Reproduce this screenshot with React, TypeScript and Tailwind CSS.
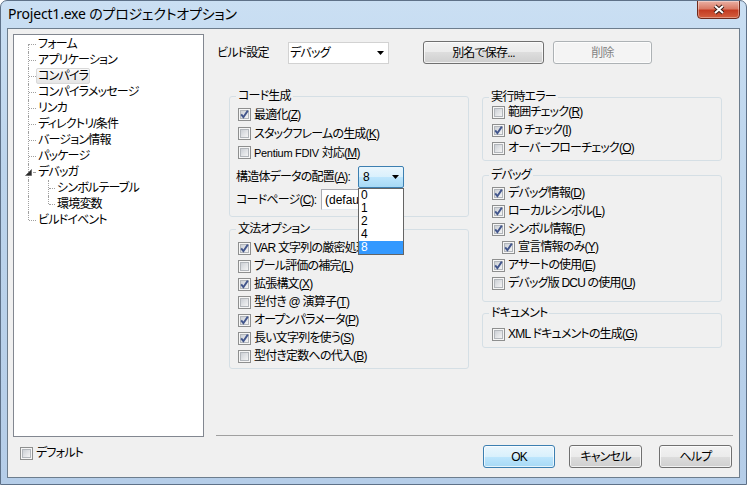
import React from "react";

const FONT = "font-['Liberation_Sans','Noto_Sans_CJK_JP',sans-serif] [font-feature-settings:'palt'] tracking-[-0.8px]";

const mn = (s: string, k: string) => (
  <>
    {s}(<u className="underline-offset-[1px]">{k}</u>)
  </>
);

function Check({ on }: { on?: boolean }) {
  return (
    <svg width="13" height="13" viewBox="0 0 13 13" className="flex-none">
      <defs>
        <linearGradient id="cbg" x1="0" y1="0" x2="1" y2="1">
          <stop offset="0" stopColor="#c9cdd3" />
          <stop offset="1" stopColor="#f7f7f7" />
        </linearGradient>
      </defs>
      <rect x="0.5" y="0.5" width="12" height="12" fill="#f6f6f6" stroke="#8e8f8f" />
      <rect x="2.5" y="2.5" width="8" height="8" fill="url(#cbg)" stroke="#b2b6bb" />
      {on && <path d="M3.2 6.4 L5.4 9.2 L9.8 2.6" fill="none" stroke="#42568c" strokeWidth="1.9" />}
    </svg>
  );
}

function CB({ on, children, indent }: { on?: boolean; children: React.ReactNode; indent?: boolean }) {
  return (
    <div className={`flex h-[18px] items-center gap-[3px] ${indent ? "pl-[10px]" : ""}`}>
      <Check on={on} />
      <span className="whitespace-nowrap leading-[14px]">{children}</span>
    </div>
  );
}

function Group({ title, className, children }: { title: string; className: string; children: React.ReactNode }) {
  return (
    <div className={`relative rounded-[3px] border border-[#d5dfe5] ${className}`}>
      <span className="absolute -top-[8px] left-[6px] bg-[#f0f0f0] px-[2px] leading-[14px]">{title}</span>
      {children}
    </div>
  );
}

function Button({ children, kind, className }: { children: React.ReactNode; kind?: "default" | "disabled"; className: string }) {
  const look =
    kind === "default"
      ? "border-[#3c7fb1] bg-[linear-gradient(180deg,#eaf6fd_0%,#d9f0fc_50%,#bee6fd_50%,#a7d9f5_100%)] text-black"
      : kind === "disabled"
      ? "border-[#adb2b5] bg-[#f4f4f4] text-[#838383]"
      : "border-[#707070] bg-[linear-gradient(180deg,#f2f2f2_0%,#ebebeb_50%,#dddddd_50%,#cfcfcf_100%)] text-black";
  return (
    <div className={`flex h-[23px] items-center justify-center rounded-[3px] border shadow-[inset_0_0_0_1px_rgba(255,255,255,0.7)] ${look} ${className}`}>
      {children}
    </div>
  );
}

const Arrow = () => (
  <svg width="7" height="4" viewBox="0 0 7 4" className="flex-none">
    <path d="M0 0 H7 L3.5 4 Z" fill="#000" />
  </svg>
);

const TREE = [
  { t: "フォーム" },
  { t: "アプリケーション" },
  { t: "コンパイラ", sel: true },
  { t: "コンパイラメッセージ" },
  { t: "リンカ" },
  { t: "ディレクトリ/条件" },
  { t: "バージョン情報" },
  { t: "パッケージ" },
  { t: "デバッガ", open: true },
  { t: "シンボルテーブル", child: true },
  { t: "環境変数", child: true, lastChild: true },
  { t: "ビルドイベント", last: true },
];

function TreeRow({ r, i }: { r: (typeof TREE)[number]; i: number }) {
  const dot = "border-dotted border-[#a0a0a0]";
  return (
    <div className={`relative flex h-[16px] items-center ${r.child ? "pl-[41px]" : "pl-[22px]"}`}>
      {/* root vertical connector */}
      <span
        className={`absolute left-[14px] w-0 border-l ${dot} ${
          i === 0 ? "top-[8px] bottom-0" : r.last ? "top-0 h-[8px]" : "top-0 bottom-0"
        }`}
      />
      {r.child ? (
        <>
          <span className={`absolute left-[34px] w-0 border-l ${dot} ${r.lastChild ? "top-0 h-[8px]" : "top-0 bottom-0"}`} />
          <span className={`absolute left-[35px] top-[8px] h-0 w-[6px] border-t ${dot}`} />
        </>
      ) : r.open ? (
        <>
          <svg width="7" height="7" viewBox="0 0 7 7" className="absolute left-[11px] top-[5px]">
            <path d="M6.5 0.5 V6.5 H0.5 Z" fill="#2b2b2b" stroke="#555" strokeWidth="0.6" />
          </svg>
          <span className={`absolute left-[19px] top-[8px] h-0 w-[2px] border-t ${dot}`} />
        </>
      ) : (
        <span className={`absolute left-[15px] top-[8px] h-0 w-[7px] border-t ${dot}`} />
      )}
      <span
        className={`whitespace-nowrap rounded-[2px] border px-[1px] leading-[14px] ${
          r.sel ? "border-[#d9d9d9] bg-[linear-gradient(180deg,#fafafa,#e5e5e5)]" : "border-transparent"
        }`}
      >
        {r.t}
      </span>
    </div>
  );
}

export default function App() {
  return (
    <div
      className={`${FONT} flex h-[485px] w-[747px] flex-col overflow-hidden rounded-t-[7px] border border-[#5e7188] bg-[linear-gradient(180deg,#cadff3_0%,#bcd4ec_35%,#b5cde8_100%)] text-[12px] text-black`}
    >
      {/* TITLE BAR */}
      <div className="flex h-[27px] flex-none items-start justify-between">
        <div className="pl-[7px] pt-[3px] font-['Noto_Sans','Noto_Sans_CJK_JP',sans-serif] text-[14px] leading-[20px] tracking-[-0.2px] text-black [font-feature-settings:'palt']">
          Project1.exe のプロジェクトオプション
        </div>
        <div className="mr-[6px] mt-[-1px] flex h-[19px] w-[43px] items-center justify-center rounded-b-[4px] border border-[#6e2a1c] bg-[linear-gradient(180deg,#eab1a4_0%,#d97b66_45%,#c43c22_55%,#d4603f_100%)] shadow-[inset_0_0_0_1px_rgba(255,255,255,0.35)]">
          <svg width="14" height="11" viewBox="0 0 14 11">
            <path d="M3 2 L11 9 M11 2 L3 9" stroke="#3b1d16" strokeWidth="4" />
            <path d="M3 2 L11 9 M11 2 L3 9" stroke="#fff" strokeWidth="2" />
          </svg>
        </div>
      </div>

      {/* CLIENT AREA */}
      <div className="ml-[6px] flex h-[450px] w-[733px] flex-none border border-[#6d7d8d] bg-[#f0f0f0]">
        {/* left: tree + default */}
        <div className="flex w-[208px] flex-none flex-col">
          <div className="ml-[5px] mt-[5px] h-[403px] w-[191px] border border-[#828790] bg-white pt-[1px]">
            {TREE.map((r, i) => (
              <TreeRow key={r.t} r={r} i={i} />
            ))}
          </div>
          <div className="ml-[12px] mt-[7px]">
            <CB>デフォルト</CB>
          </div>
        </div>

        {/* right: options */}
        <div className="flex w-[517px] flex-none flex-col">
          {/* build config row */}
          <div className="mt-[12px] flex h-[23px] items-center">
            <span className="w-[72px] pl-[1px]">ビルド設定</span>
            <div className="flex h-[22px] w-[101px] items-center justify-between border border-[#d2d2d2] bg-white pl-[1px] pr-[4px]">
              <span>デバッグ</span>
              <Arrow />
            </div>
            <Button className="ml-[34px] w-[121px]">別名で保存...</Button>
            <Button kind="disabled" className="ml-[9px] w-[99px]">削除</Button>
          </div>

          {/* option groups */}
          <div className="mt-[32px] flex gap-[13px] pl-[13px]">
            <div className="flex w-[240px] flex-col">
              <Group title="コード生成" className="h-[121px] pl-[8px] pt-[8px]">
                <div className="[&>div]:h-[19px]">
                  <CB on>{mn("最適化", "Z")}</CB>
                  <CB>{mn("スタックフレームの生成", "K")}</CB>
                  <CB>
                    <span className="text-[11px] tracking-[-0.3px]">Pentium FDIV </span>
                    {mn("対応", "M")}
                  </CB>
                </div>
                <div className="ml-[-2px] mt-[4px] flex items-center">
                  <span className="w-[122px] whitespace-nowrap">{mn("構造体データの配置", "A")}:</span>
                  <div className="relative">
                    <div className="flex h-[22px] w-[46px] items-center justify-between rounded-[2px] border border-[#3c7fb1] bg-[linear-gradient(180deg,#eaf6fd_0%,#d9f0fc_50%,#bee6fd_50%,#a7d9f5_100%)] pl-[4px] pr-[4px]">
                      <span>8</span>
                      <Arrow />
                    </div>
                    {/* open drop-down list */}
                    <div className="absolute left-0 top-[22px] z-10 w-[46px] border border-[#646464] bg-white">
                      {["0", "1", "2", "4", "8"].map((v) => (
                        <div
                          key={v}
                          className={`h-[13px] pl-[2px] leading-[13px] ${v === "8" ? "bg-[#3399ff] text-white" : ""}`}
                        >
                          {v}
                        </div>
                      ))}
                    </div>
                  </div>
                </div>
                <div className="ml-[-2px] mt-[1px] flex items-center">
                  <span className="w-[85px] whitespace-nowrap">{mn("コードページ", "C")}:</span>
                  <div className="flex h-[21px] w-[80px] items-center overflow-hidden border border-[#abadb3] border-b-[#e3e9ef] border-r-[#dbdfe6] bg-white pl-[3px] tracking-normal">
                    (default)
                  </div>
                </div>
              </Group>

              <Group title="文法オプション" className="mt-[12px] h-[140px] pl-[8px] pt-[9px]">
                <CB on>VAR {mn("文字列の厳密処理", "V")}</CB>
                <CB>{mn("ブール評価の補完", "L")}</CB>
                <CB on>{mn("拡張構文", "X")}</CB>
                <CB>{mn("型付き @ 演算子", "T")}</CB>
                <CB on>{mn("オープンパラメータ", "P")}</CB>
                <CB on>{mn("長い文字列を使う", "S")}</CB>
                <CB>{mn("型付き定数への代入", "B")}</CB>
              </Group>
            </div>

            <div className="mt-[1px] flex w-[240px] flex-col">
              <Group title="実行時エラー" className="h-[64px] pl-[9px] pt-[5px]">
                <CB>{mn("範囲チェック", "R")}</CB>
                <CB on>I/O {mn("チェック", "I")}</CB>
                <CB>{mn("オーバーフローチェック", "O")}</CB>
              </Group>
              <Group title="デバッグ" className="mt-[14px] h-[127px] pl-[9px] pt-[8px]">
                <CB on>{mn("デバッグ情報", "D")}</CB>
                <CB on>{mn("ローカルシンボル", "L")}</CB>
                <CB on>{mn("シンボル情報", "F")}</CB>
                <CB on indent>{mn("宣言情報のみ", "Y")}</CB>
                <CB on>{mn("アサートの使用", "E")}</CB>
                <CB>デバッグ版 DCU {mn("の使用", "U")}</CB>
              </Group>
              <Group title="ドキュメント" className="mt-[11px] h-[35px] pl-[9px] pt-[11px]">
                <CB>XML {mn("ドキュメントの生成", "G")}</CB>
              </Group>
            </div>
          </div>

          {/* separator */}
          <div className="mt-[66px] h-[2px] border-t border-[#a0a0a0] border-b-white" />

          {/* dialog buttons */}
          <div className="mt-[8px] flex justify-end pr-[1px]">
            <Button kind="default" className="w-[72px]">OK</Button>
            <Button className="ml-[14px] w-[73px]">キャンセル</Button>
            <Button className="ml-[17px] w-[73px]">ヘルプ</Button>
          </div>
        </div>
      </div>
    </div>
  );
}
